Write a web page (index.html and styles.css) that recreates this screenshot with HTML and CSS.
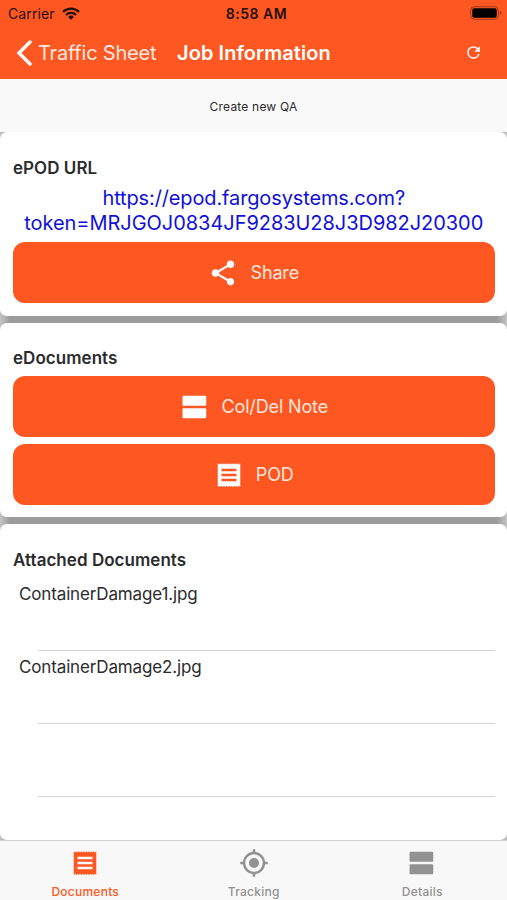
FILE: index.html
```html
<!DOCTYPE html>
<html lang="en">
<head>
<meta charset="utf-8">
<title>Job Information</title>
<link rel="stylesheet" href="styles.css">
</head>
<body>
<svg class="symbols" aria-hidden="true">
  <symbol id="receipt" viewBox="0 0 24 24"><path d="M18 17H6v-2h12v2zm0-4H6v-2h12v2zm0-4H6V7h12v2zM3 21.500l1-1 1 1 1-1 1 1 1-1 1 1 1-1 1 1 1-1 1 1 1-1 1 1 1-1 1 1 1-1 1 1 1-1 1 1v-19l-1 1-1-1-1 1-1-1-1 1-1-1-1 1-1-1-1 1-1-1-1 1-1-1-1 1-1-1-1 1-1-1-1 1-1-1v19z"/></symbol>
  <symbol id="agenda" viewBox="0 0 24 24"><path d="M20 13H3c-.55 0-1 .45-1 1v6c0 .55.45 1 1 1h17c.55 0 1-.45 1-1v-6c0-.55-.45-1-1-1zm0-10H3c-.55 0-1 .45-1 1v6c0 .55.45 1 1 1h17c.55 0 1-.45 1-1V4c0-.55-.45-1-1-1z"/></symbol>
  <symbol id="share" viewBox="0 0 24 24"><path d="M18 16.080c-.76 0-1.440.3-1.960.77L8.910 12.700c.05-.23.09-.46.09-.7s-.04-.47-.09-.7l7.050-4.110c.54.5 1.250.81 2.040.81 1.660 0 3-1.340 3-3s-1.340-3-3-3-3 1.340-3 3c0 .24.040.47.090.7L8.040 9.810C7.500 9.310 6.790 9 6 9c-1.660 0-3 1.340-3 3s1.340 3 3 3c.79 0 1.500-.31 2.040-.81l7.120 4.160c-.05.21-.08.43-.08.65 0 1.610 1.310 2.920 2.920 2.920s2.920-1.310 2.920-2.920-1.310-2.920-2.920-2.920z"/></symbol>
  <symbol id="refresh" viewBox="0 0 24 24"><path d="M17.650 6.350A7.960 7.960 0 0 0 12 4a8 8 0 1 0 7.730 10h-2.080A6 6 0 1 1 12 6c1.660 0 3.140.69 4.220 1.780L13 11h7V4l-2.350 2.350z"/></symbol>
  <symbol id="location" viewBox="0 0 24 24"><path d="M12 8a4 4 0 1 0 0 8 4 4 0 0 0 0-8zm8.940 3A8.994 8.994 0 0 0 13 3.060V1h-2v2.060A8.994 8.994 0 0 0 3.060 11H1v2h2.060A8.994 8.994 0 0 0 11 20.940V23h2v-2.060A8.994 8.994 0 0 0 20.940 13H23v-2h-2.060zM12 19a7 7 0 1 1 0-14 7 7 0 0 1 0 14z"/></symbol>
</svg>
<header class="header">
  <div class="status">
    <div class="carrier"><span class="carrier-name">Carrier</span>
      <svg class="wifi" viewBox="0 0 18 13"><g fill="none" stroke="currentColor" stroke-width="2.300"><path d="M1 4.900a11.500 11.500 0 0 1 16 0"/><path d="M3.900 8a7.300 7.300 0 0 1 10.200 0"/></g><path d="M9 12.800 6.100 9.900a4.200 4.200 0 0 1 5.800 0z" fill="currentColor"/></svg>
    </div>
    <div class="time"><span class="time-text">8:58 AM</span></div>
    <svg class="battery" viewBox="0 0 32 14"><rect x=".7" y=".7" width="27.600" height="12.600" rx="3.500" fill="none" stroke="#a23c1c" stroke-width="1"/><rect x="2.300" y="2.300" width="24.400" height="9.400" rx="1.800"/><path d="M30 4.500q3 2.500 0 5z" fill="#a23c1c"/></svg>
  </div>
  <nav class="nav">
    <svg class="back" viewBox="0 0 16 26"><path d="M14 2 3 13l11 11" fill="none" stroke="#fff" stroke-width="3.400" stroke-linecap="round"/></svg>
    <span class="back-label">Traffic Sheet</span>
    <h1 class="title">Job Information</h1>
    <svg class="refresh"><use href="#refresh"/></svg>
  </nav>
</header>
<div class="toolbar"><span class="create">Create new QA</span></div>
<main class="cards">
  <section class="card card-url">
    <h2 class="heading h-url">ePOD URL</h2>
    <a class="url"><span class="url-host">https://epod.fargosystems.com?</span><br><span class="url-token">token=MRJGOJ0834JF9283U28J3D982J20300</span></a>
    <div class="button"><svg class="icon"><use href="#share"/></svg><span class="label l-share">Share</span></div>
  </section>
  <section class="card card-docs">
    <h2 class="heading h-docs">eDocuments</h2>
    <div class="button"><svg class="icon"><use href="#agenda"/></svg><span class="label l-note">Col/Del Note</span></div>
    <div class="button"><svg class="icon"><use href="#receipt"/></svg><span class="label l-pod">POD</span></div>
  </section>
  <section class="card card-files">
    <h2 class="heading h-files">Attached Documents</h2>
    <div class="file"><span class="file-name">ContainerDamage1.jpg</span></div>
    <div class="file"><span class="file-name">ContainerDamage2.jpg</span></div>
    <div class="file"></div>
  </section>
</main>
<footer class="tabs">
  <div class="tab active"><svg class="icon"><use href="#receipt"/></svg><span class="tab-label">Documents</span></div>
  <div class="tab"><svg class="icon"><use href="#location"/></svg><span class="tab-label">Tracking</span></div>
  <div class="tab"><svg class="icon"><use href="#agenda"/></svg><span class="tab-label">Details</span></div>
</footer>
</body>
</html>
```
FILE: styles.css
```css
* { box-sizing: border-box; }
body {
  margin: 0;
  width: 507px;
  height: 900px;
  overflow: hidden;
  display: flex;
  flex-direction: column;
  font-family: Inter, "Liberation Sans", sans-serif;
  color: #2b2b2d;
  background: #fff;
  white-space: nowrap;
}
h1, h2 { margin: 0; }
svg { display: block; flex: none; fill: currentColor; }
.symbols { display: none; }
.header { height: 79px; background: #ff5722; color: #fff; }
.status {
  display: grid;
  grid-template-columns: 1fr auto 1fr;
  align-items: center;
  height: 27px;
  padding: 0 5px 0 8px;
  color: #24100a;
}
.carrier { display: flex; align-items: center; gap: 7px; font-size: 14px; letter-spacing: .12px; }
.wifi { width: 18px; height: 13px; margin-top: -1px; }
.time { font-size: 14px; font-weight: 600; padding-left: 3px; letter-spacing: .5px; }
.battery { width: 32px; height: 14px; margin-top: -1px; justify-self: end; color: #000; }
.nav { display: flex; align-items: center; height: 51px; padding-left: 16px; }
.back { width: 16px; height: 26px; }
.back-label { margin-left: 6px; font-size: 20px; letter-spacing: -.2px; width: 119px; color: #ffeae2; }
.title { margin-left: 20px; width: 287px; font-size: 20px; font-weight: 600; letter-spacing: .06px; }
.refresh { width: 19px; height: 19px; }
.toolbar {
  height: 53px;
  padding-top: 1px;
  display: flex;
  align-items: center;
  justify-content: center;
  font-size: 12px;
  letter-spacing: .2px;
  background: #f9f9f9;
}
.cards {
  height: 708px;
  display: flex;
  flex-direction: column;
  gap: 7px;
  background: linear-gradient(90deg, #c4c4c4, #9c9c9c 10px, #9c9c9c 497px, #c4c4c4);
}
.card { padding: 0 12.500px 0 13px; background: #fff; border-radius: 7px; }
.card-url { height: 184px; padding-top: 24px; }
.card-docs { height: 194px; padding-top: 23px; }
.card-files { height: 316px; padding-top: 24px; }
.heading { font-size: 17px; line-height: 24px; font-weight: 600; letter-spacing: .04px; }
.url { display: block; margin-top: 6px; margin-bottom: 7px; text-align: center; font-size: 20px; line-height: 24.500px; color: #1010d8; }
.url-host { letter-spacing: -.13px; }
.url-token { letter-spacing: -.05px; }
.button {
  display: flex;
  align-items: center;
  justify-content: center;
  gap: 12px;
  height: 61px;
  border-radius: 12px;
  color: #fff;
  background: #ff5722;
}
.card-docs .heading { margin-bottom: 6px; }
.button + .button { margin-top: 7px; }
.icon { width: 30px; height: 30px; }
.label { font-size: 18px; letter-spacing: -.15px; color: #ffe6dc; }
.file { height: 73px; margin-left: 25px; border-bottom: 1px solid #d4d4d6; }
.card-files .heading { margin-bottom: 6px; }
.file-name { display: block; margin-left: -19px; padding-top: 4px; font-size: 17px; line-height: 24px; letter-spacing: -.14px; }
.tabs { display: flex; height: 60px; background: #f8f8f8; border-top: 1px solid #d2d2d4; }
.tab { width: 168.500px; padding: 7px 0 0 2px; display: flex; flex-direction: column; align-items: center; color: #929292; }
.tab.active { color: #ff5722; }
.tab-label { margin-top: 6px; font-size: 12px; line-height: 16px; font-weight: 500; letter-spacing: .25px; }
```
